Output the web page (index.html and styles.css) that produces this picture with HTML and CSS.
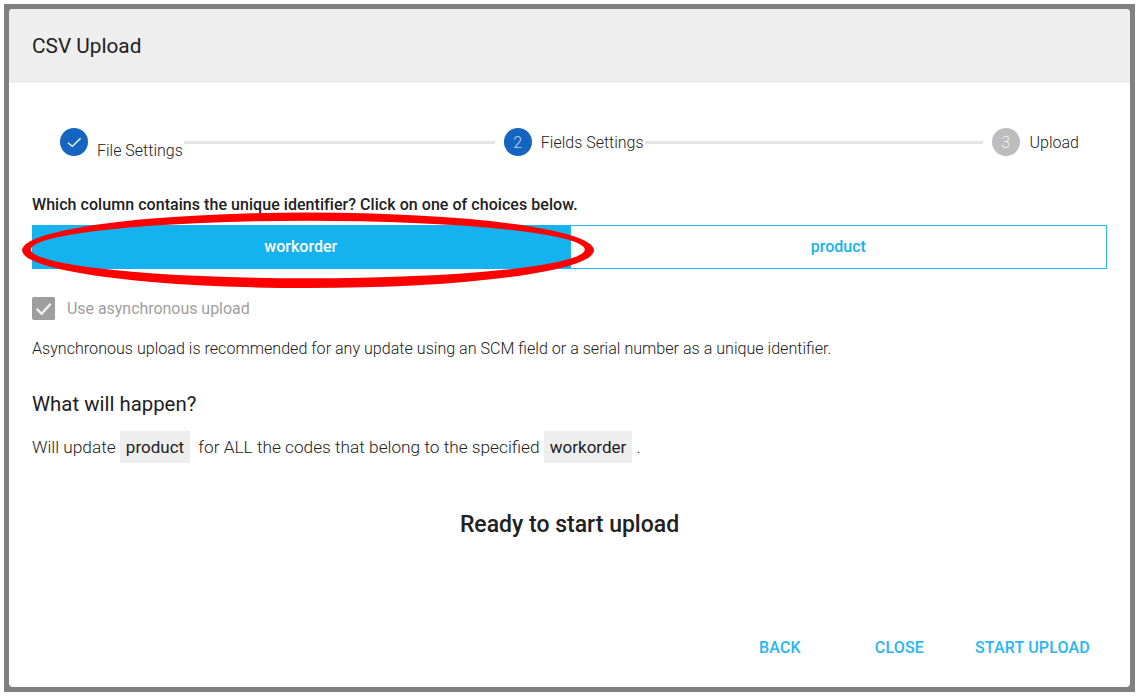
FILE: index.html
```html
<!DOCTYPE html>
<html lang="en">
<head>
<meta charset="utf-8">
<title>CSV Upload</title>
<link rel="stylesheet" href="styles.css">
</head>
<body>
<div class="backdrop">
  <div class="dialog">
    <header class="dialog-header"><h1 class="dialog-title">CSV Upload</h1></header>
    <div class="dialog-body">
      <div class="stepper">
        <div class="step step-first">
          <span class="step-circle step-active">
            <svg class="step-check" viewBox="0 0 16 16" width="16" height="16"><path d="M2 8.7 6.3 12.4 14.6 4.2" fill="none" stroke="#fff" stroke-width="1.3"/></svg>
          </span>
          <span class="step-label step-label-low">File Settings</span>
        </div>
        <div class="step-line step-line-first"></div>
        <div class="step">
          <span class="step-circle step-active">2</span>
          <span class="step-label">Fields Settings</span>
        </div>
        <div class="step-line step-line-second"></div>
        <div class="step">
          <span class="step-circle step-idle">3</span>
          <span class="step-label step-label-last">Upload</span>
        </div>
      </div>
      <p class="question">Which column contains the unique identifier? Click on one of choices below.</p>
      <div class="choices">
        <button class="choice choice-selected">workorder</button>
        <button class="choice">product</button>
      </div>
      <label class="async-row">
        <span class="checkbox">
          <svg viewBox="0 0 24 24" width="24" height="24"><path d="M5 13 10 18 19.5 7.5" fill="none" stroke="#fff" stroke-opacity=".85" stroke-width="2.5"/></svg>
        </span>
        <span class="async-label">Use asynchronous upload</span>
      </label>
      <p class="async-note">Asynchronous upload is recommended for any update using an SCM field or a serial number as a unique identifier.</p>
      <h2 class="what-title">What will happen?</h2>
      <p class="what-text">Will update <span class="chip">product</span> for ALL the codes that belong to the specified <span class="chip chip-last">workorder</span> .</p>
      <h3 class="ready">Ready to start upload</h3>
    </div>
    <footer class="dialog-actions">
      <button class="action action-back">BACK</button>
      <button class="action action-close">CLOSE</button>
      <button class="action">START UPLOAD</button>
    </footer>
    <svg class="annotation" viewBox="0 0 580 80" width="580" height="80"><path fill="#ff0000" fill-rule="evenodd" d="M3 40.3a286 37.8 0 1 0 572 0a286 37.8 0 1 0-572 0ZM11.8 39.5a277 28.8 0 1 0 554 0a277 28.8 0 1 0-554 0Z"/></svg>
  </div>
</div>
</body>
</html>
```
FILE: styles.css
```css
* { box-sizing: border-box; }
html, body { margin: 0; height: 100%; background: #fff; }
body {
  padding: 4px 6px 5px 4px;
  font-family: Roboto, "Liberation Sans", sans-serif;
  font-size: 16px;
  color: #212121;
}
.backdrop {
  height: 688px;
  padding: 5px;
  background: #808080;
}
.dialog {
  position: relative;
  display: flex;
  flex-direction: column;
  height: 678px;
  background: #fff;
  border-radius: 4px;
  overflow: hidden;
}
.dialog-header {
  flex: none;
  height: 74px;
  padding: 0 23px;
  display: flex;
  align-items: center;
  background: #eeeeee;
}
.dialog-title { margin: 0; font-size: 20.8px; font-weight: 400; }
.dialog-body { flex: 1; padding: 0 23px; }
.stepper {
  display: flex;
  align-items: center;
  height: 28px;
  margin-top: 45px;
  padding: 0 28px;
}
.step { flex: none; display: flex; align-items: center; height: 28px; }
.step-first { position: relative; }
.step-circle {
  flex: none;
  width: 28px;
  height: 28px;
  border-radius: 50%;
  display: flex;
  align-items: center;
  justify-content: center;
  color: rgba(255, 255, 255, .75);
  font-size: 16px;
  font-weight: 300;
}
.step-active { background: #1565c0; }
.step-idle { background: #bdbdbd; }
.step-label {
  margin-left: 9px;
  font-size: 16px;
  font-weight: 300;
  color: #212121;
}
.step-label-low { position: relative; top: 8px; }
.step-label-last { margin-left: 10px; }
.step-line {
  height: 3px;
  margin: 0 9px 0 1px;
  background: #e4e4e4;
}
.step-line-first { flex: 311; }
.step-line-second { flex: 338; }
.question { margin: 39px 0 0; height: 19px; line-height: 19px; font-size: 16px; font-weight: 500; letter-spacing: .05px; }
.choices { display: flex; height: 44px; margin-top: 11px; }
.choice {
  flex: 1;
  padding: 0 0 2px;
  background: #fff;
  border: 1px solid #29b6f6;
  color: #14b2ee;
  font: 500 16px Roboto, sans-serif;
}
.choice-selected { background: #14b2ee; border-color: #14b2ee; color: #fff; }
.async-row { display: flex; align-items: center; height: 24px; margin-top: 27px; }
.checkbox {
  flex: none;
  width: 23px;
  height: 23px;
  border-radius: 2px;
  background: #9e9e9e;
  display: flex;
  align-items: center;
  justify-content: center;
}
.async-label { margin-left: 12px; font-size: 16px; font-weight: 400; color: #a0a0a0; letter-spacing: -.04px; }
.async-note { margin: 19px 0 0; height: 19px; line-height: 19px; font-size: 16.1px; font-weight: 300; }
.what-title { margin: 32px 0 0; height: 28px; line-height: 28px; font-size: 20.4px; font-weight: 400; }
.what-text { margin: 13px 0 0; height: 32px; line-height: 32px; font-size: 17.25px; font-weight: 300; }
.chip {
  display: inline-block;
  height: 32px;
  padding: 0 6px;
  margin: 0 4px 0 0;
  background: #eeeeee;
  font-size: 17px;
  font-weight: 400;
  color: #212121;
}
.chip-last { margin-right: 0; }
.ready { margin: 48px 0 0; text-align: center; font-size: 23px; font-weight: 500; line-height: 28px; }
.dialog-actions {
  flex: none;
  display: flex;
  justify-content: flex-end;
  align-items: center;
  height: 80px;
  padding: 0 40px 0 0;
}
.action {
  padding: 0;
  border: 0;
  background: none;
  color: #29b6f6;
  font: 500 16px Roboto, sans-serif;
  letter-spacing: .17px;
}
.action-back { margin-right: 74px; }
.action-close { margin-right: 51px; }
.annotation { position: absolute; left: 10px; top: 201px; }
```
